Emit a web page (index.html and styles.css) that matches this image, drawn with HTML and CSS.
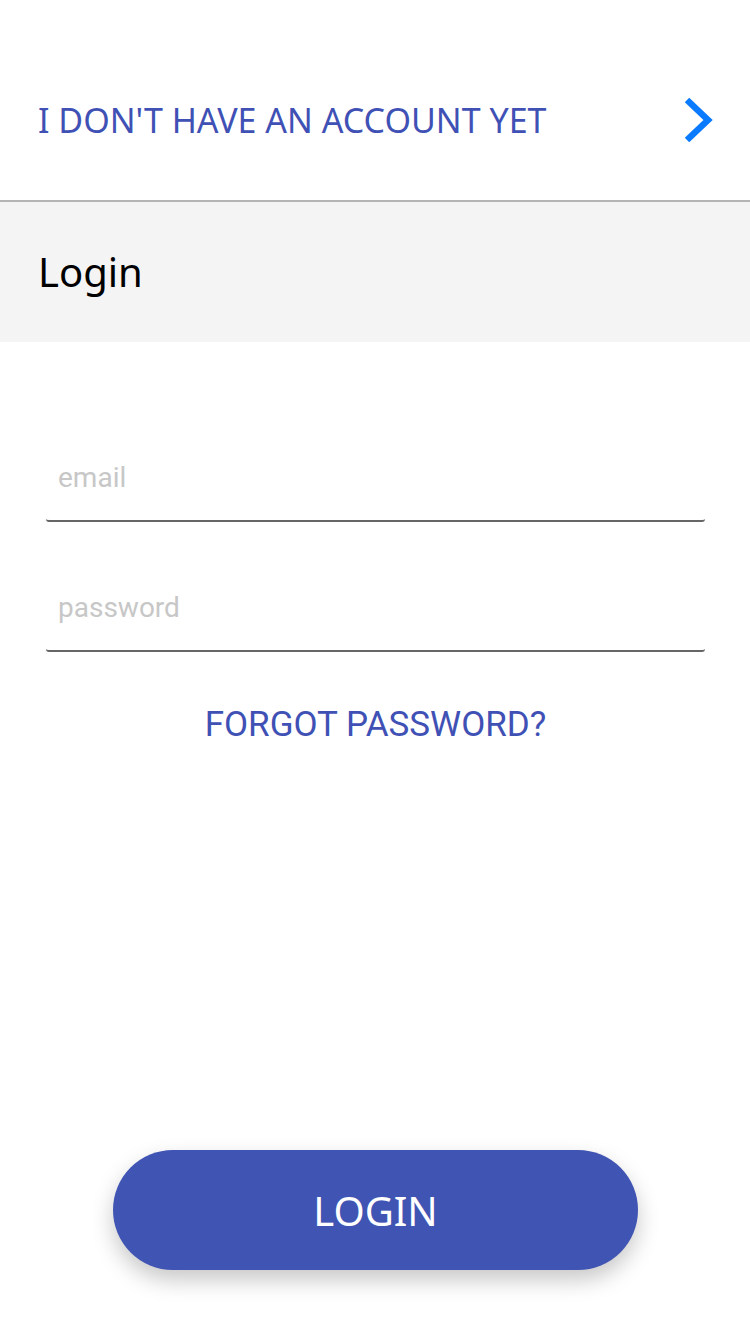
FILE: index.html
```html
<!DOCTYPE html>
<html>
<head>
<meta charset="utf-8">
<link rel="stylesheet" href="styles.css">
</head>
<body>
<div class="screen">
  <header class="topbar">
    <span class="topbar-link">I DON'T HAVE AN ACCOUNT YET</span>
    <svg class="chevron" width="32" height="48" viewBox="0 0 32 48">
      <path d="M5 4 L26 24 L5 44" fill="none" stroke="#0a7afe" stroke-width="6.5" stroke-linecap="butt" stroke-linejoin="miter"/>
    </svg>
  </header>
  <section class="title-bar">
    <h1 class="title">Login</h1>
  </section>
  <form class="form">
    <input class="field" type="email" placeholder="email">
    <input class="field field-2" type="password" placeholder="password">
    <div class="forgot">FORGOT PASSWORD?</div>
    <button type="button" class="login-btn">LOGIN</button>
  </form>
</div>
</body>
</html>
```

FILE: styles.css
```css
html, body {
  margin: 0;
  padding: 0;
  background: #ffffff;
}

.screen {
  width: 750px;
  height: 1334px;
  display: flex;
  flex-direction: column;
  overflow: hidden;
}

.topbar {
  height: 202px;
  box-sizing: border-box;
  border-bottom: 2px solid #b4b4b4;
  display: flex;
  align-items: center;
  justify-content: space-between;
  padding: 40px 36px 0 38px;
  flex-shrink: 0;
}

.topbar-link {
  font-family: "Noto Sans", "Open Sans", sans-serif;
  font-size: 34px;
  line-height: 46px;
  color: #3f51b5;
}

.chevron {
  display: block;
}

.title-bar {
  height: 140px;
  background: #f4f4f4;
  display: flex;
  align-items: center;
  padding: 0 38px;
  flex-shrink: 0;
}

.title {
  margin: 0;
  font-family: "Noto Sans", "Open Sans", sans-serif;
  font-weight: 400;
  font-size: 40px;
  line-height: 50px;
  color: #000;
}

.form {
  flex: 1;
  display: flex;
  flex-direction: column;
  align-items: center;
  padding: 100px 45px 64px 46px;
}

.field {
  width: 100%;
  height: 80px;
  box-sizing: border-box;
  border: none;
  border-bottom: 2px solid #666666;
  border-radius: 0 0 3px 3px;
  outline: none;
  background: transparent;
  padding: 0 0 8px 12px;
  font-family: Roboto, "Liberation Sans", sans-serif;
  font-size: 28px;
  color: #333;
}

.field::placeholder {
  color: #c7c7c7;
}

.field-2 {
  margin-top: 50px;
}

.forgot {
  margin-top: 52px;
  font-family: Roboto, "Liberation Sans", sans-serif;
  font-size: 35px;
  line-height: 42px;
  color: #3f51b5;
}

.login-btn {
  margin-top: auto;
  width: 525px;
  height: 120px;
  border: none;
  border-radius: 60px;
  background: #3f54b3;
  color: #ffffff;
  font-family: "Noto Sans", "Open Sans", sans-serif;
  font-size: 40px;
  box-shadow: 0 10px 22px rgba(0, 0, 0, 0.22);
  cursor: pointer;
}
```
